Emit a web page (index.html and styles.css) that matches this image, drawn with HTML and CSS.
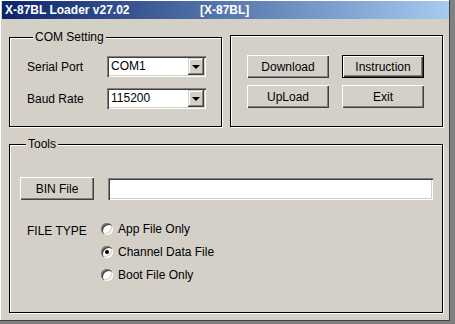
FILE: index.html
```html
<!DOCTYPE html>
<html lang="en">
<head>
  <meta charset="UTF-8" />
  <title>X-87BL Loader v27.02</title>
  <link rel="stylesheet" href="styles.css">
</head>
<body>
  <div class="window">
    <div class="titlebar">
      <span class="title">X-87BL Loader v27.02</span>
      <span class="title-tag">[X-87BL]</span>
    </div>

    <div class="content">
      <div class="top-row">
        <fieldset class="group com-group">
          <legend>COM Setting</legend>
          <div class="field-row">
            <span class="field-label">Serial Port</span>
            <div class="combo">
              <span class="combo-value">COM1</span>
              <span class="combo-btn"><span class="arrow"></span></span>
            </div>
          </div>
          <div class="field-row">
            <span class="field-label">Baud Rate</span>
            <div class="combo">
              <span class="combo-value">115200</span>
              <span class="combo-btn"><span class="arrow"></span></span>
            </div>
          </div>
        </fieldset>

        <div class="group action-group">
          <div class="btn-grid">
            <button class="btn">Download</button>
            <button class="btn btn-default">Instruction</button>
            <button class="btn">UpLoad</button>
            <button class="btn">Exit</button>
          </div>
        </div>
      </div>

      <fieldset class="group tools-group">
        <legend>Tools</legend>
        <div class="bin-row">
          <button class="btn bin-btn">BIN File</button>
          <div class="text-field"></div>
        </div>
        <div class="type-row">
          <span class="type-label">FILE TYPE</span>
          <div class="radio-list">
            <div class="radio-item"><span class="radio"></span>App File Only</div>
            <div class="radio-item"><span class="radio checked"></span>Channel Data File</div>
            <div class="radio-item"><span class="radio"></span>Boot File Only</div>
          </div>
        </div>
      </fieldset>
    </div>
  </div>
</body>
</html>
```

FILE: styles.css
```css
* {
  box-sizing: border-box;
}

body {
  margin: 0;
  font-family: 'Liberation Sans', Arial, sans-serif;
  font-size: 12px;
  color: #000;
  background: #d4d0c8;
}

.window {
  width: 455px;
  height: 324px;
  background: #d4d0c8;
  border-right: 5px solid #808080;
  border-bottom: 3px solid #808080;
  box-shadow: inset -1px -1px 0 #404040, inset 1px 1px 0 #fff;
  overflow: hidden;
}

.titlebar {
  display: flex;
  height: 18px;
  margin: 1px 1px 0 2px;
  padding-left: 3px;
  background: linear-gradient(to right, #0a246a, #a6caf0);
  color: #fff;
  font-weight: bold;
  line-height: 18px;
  white-space: nowrap;
}

.title {
  width: 195px;
}

.content {
  padding: 11px 6px 0 9px;
}

.top-row {
  display: flex;
  gap: 8px;
}

.group {
  margin: 0;
  border: 1px solid #000;
  box-shadow: 1px 1px 0 #fff, inset 1px 1px 0 #fff;
  min-width: 0;
}

.group legend {
  margin-left: 6px;
  padding: 0 2px;
  line-height: 14px;
  background: #d4d0c8;
}

.com-group {
  width: 213px;
  padding: 12px 0 17px 17px;
}

.field-row {
  display: flex;
  align-items: center;
}

.field-row + .field-row {
  margin-top: 11px;
}

.field-label {
  width: 80px;
}

.combo {
  display: flex;
  width: 99px;
  height: 21px;
  padding: 2px;
  background: #fff;
  box-shadow: inset 1px 1px 0 #808080, inset 2px 2px 0 #404040,
    inset -1px -1px 0 #fff, inset -2px -2px 0 #d4d0c8;
}

.combo-value {
  flex: 1;
  padding-left: 2px;
  line-height: 17px;
}

.combo-btn {
  display: flex;
  align-items: center;
  justify-content: center;
  width: 16px;
  background: #d4d0c8;
  box-shadow: inset -1px -1px 0 #404040, inset 1px 1px 0 #d4d0c8,
    inset -2px -2px 0 #808080, inset 2px 2px 0 #fff;
}

.arrow {
  width: 0;
  height: 0;
  border-left: 4px solid transparent;
  border-right: 4px solid transparent;
  border-top: 4px solid #000;
  margin-top: 1px;
}

.action-group {
  width: 213px;
  margin-top: 5px;
  padding: 19px 0 0 16px;
}

.btn-grid {
  display: grid;
  grid-template-columns: 82px 82px;
  grid-auto-rows: 23px;
  column-gap: 13px;
  row-gap: 7px;
}

.btn {
  font-family: inherit;
  font-size: 12px;
  color: #000;
  margin: 0;
  padding: 0;
  border: none;
  background: #d4d0c8;
  box-shadow: inset 1px 1px 0 #fff, inset -1px -1px 0 #404040,
    inset -2px -2px 0 #808080;
}

.btn-default {
  border: 1px solid #000;
}

.tools-group {
  margin: 10px 1px 0 0;
  padding: 26px 9px 26px 10px;
}

.bin-row {
  display: flex;
  align-items: center;
  gap: 14px;
}

.bin-btn {
  width: 74px;
  height: 23px;
}

.text-field {
  flex: 1;
  height: 22px;
  background: #fff;
  box-shadow: inset 1px 1px 0 #808080, inset 2px 2px 0 #404040,
    inset -1px -1px 0 #fff, inset -2px -2px 0 #d4d0c8;
}

.type-row {
  display: flex;
  margin-top: 17px;
}

.type-label {
  width: 74px;
  margin: 7px 0 0 7px;
}

.radio-item {
  display: flex;
  align-items: center;
  gap: 5px;
  height: 23px;
}

.radio {
  position: relative;
  width: 12px;
  height: 12px;
  border-radius: 50%;
  background: #fff;
  box-shadow: inset 1px 1px 0 #808080, inset 2px 2px 0 #404040,
    inset -1px -1px 0 #fff, inset -2px -2px 0 #d4d0c8;
}

.radio.checked::after {
  content: "";
  position: absolute;
  left: 4px;
  top: 4px;
  width: 4px;
  height: 4px;
  border-radius: 50%;
  background: #000;
}
```
